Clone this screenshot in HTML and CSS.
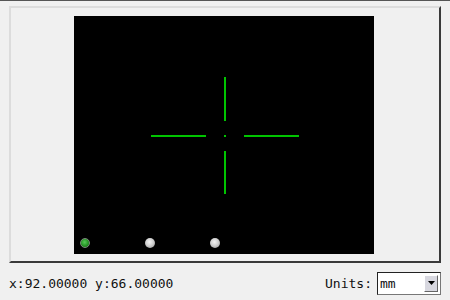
FILE: index.html
```html
<!DOCTYPE html>
<html>
<head>
<meta charset="utf-8">
<link rel="stylesheet" href="styles.css">
</head>
<body>
<div class="frame">
  <div class="canvas">
    <svg class="cross" width="300" height="238" viewBox="0 0 300 238">
      <g fill="#00c400">
        <rect x="150" y="61" width="2" height="44"/>
        <rect x="150" y="135" width="2" height="43"/>
        <rect x="77" y="119" width="55" height="2"/>
        <rect x="170" y="119" width="55" height="2"/>
        <rect x="150" y="119" width="2" height="2"/>
      </g>
    </svg>
    <div class="radios">
      <span class="radio on"></span>
      <span class="radio"></span>
      <span class="radio"></span>
    </div>
  </div>
</div>
<div class="status">
  <span class="coords">x:92.00000 y:66.00000</span>
  <div class="units">
    <span class="label">Units:</span>
    <div class="combo"><span class="val">mm</span><span class="btn"><svg width="7" height="4" viewBox="0 0 7 4"><path d="M0 0H7L3.5 4Z" fill="#000"/></svg></span></div>
  </div>
</div>
</body>
</html>
```
FILE: styles.css
```css
html, body { margin: 0; padding: 0; }
body {
  width: 450px;
  height: 300px;
  box-sizing: border-box;
  background: #f0f0f0;
  border-top: 1px solid #555;
  font-family: "DejaVu Sans Mono", monospace;
  font-size: 13px;
  color: #111;
  overflow: hidden;
}
.frame {
  margin: 5px 0 0 9px;
  width: 432px;
  height: 257px;
  box-sizing: border-box;
  border-top: 2px solid #dcdcdc;
  border-left: 2px solid #dcdcdc;
  border-right: 2px solid #3a3a3a;
  border-bottom: 2px solid #3a3a3a;
  padding: 8px 0 0 63px;
}
.canvas {
  position: relative;
  width: 300px;
  height: 238px;
  background: #000;
}
.cross { display: block; }
.radios {
  position: absolute;
  left: 6px;
  top: 222px;
  display: flex;
  gap: 55px;
}
.radio {
  width: 10px;
  height: 10px;
  box-sizing: border-box;
  border-radius: 50%;
  background: radial-gradient(circle at 45% 40%, #f4f4f4 0%, #d0d0d0 45%, #8c8c8c 100%);
}
.radio.on {
  border: 1px solid #7a8a7a;
  background: radial-gradient(circle at 45% 40%, #58c858 0%, #2a9a2a 50%, #0c600c 100%);
}
.status {
  display: flex;
  justify-content: space-between;
  align-items: center;
  height: 37px;
  padding: 3px 9px 0 9px;
  box-sizing: border-box;
}
.units { display: flex; align-items: center; gap: 5px; }
.combo {
  width: 64px;
  height: 23px;
  box-sizing: border-box;
  border: 1px solid #222;
  border-right-color: #777;
  border-bottom-color: #777;
  background: #fff;
  display: flex;
  align-items: center;
  justify-content: space-between;
  padding: 0 2px 0 2px;
}
.val { line-height: 1; }
.btn {
  width: 14px;
  height: 17px;
  box-sizing: border-box;
  background: #d8d8e0;
  border: 1px solid #fff;
  border-right-color: #666;
  border-bottom-color: #666;
  display: flex;
  align-items: center;
  justify-content: center;
}
.btn svg { display: block; }
```
